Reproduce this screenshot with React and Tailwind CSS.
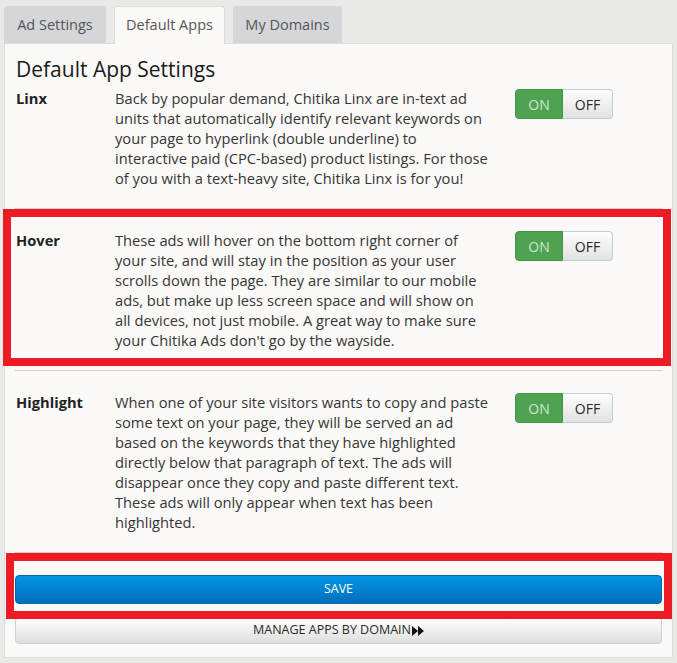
import React from 'react';

const apps = [
  {
    key: 'linx',
    label: 'Linx',
    lines: [
      'Back by popular demand, Chitika Linx are in-text ad',
      'units that automatically identify relevant keywords on',
      'your page to hyperlink (double underline) to',
      'interactive paid (CPC-based) product listings. For those',
      'of you with a text-heavy site, Chitika Linx is for you!'
    ]
  },
  {
    key: 'hover',
    label: 'Hover',
    lines: [
      'These ads will hover on the bottom right corner of',
      'your site, and will stay in the position as your user',
      'scrolls down the page. They are similar to our mobile',
      'ads, but make up less screen space and will show on',
      'all devices, not just mobile. A great way to make sure',
      "your Chitika Ads don't go by the wayside."
    ],
    marked: true
  },
  {
    key: 'highlight',
    label: 'Highlight',
    lines: [
      'When one of your site visitors wants to copy and paste',
      'some text on your page, they will be served an ad',
      'based on the keywords that they have highlighted',
      'directly below that paragraph of text. The ads will',
      'disappear once they copy and paste different text.',
      'These ads will only appear when text has been',
      'highlighted.'
    ]
  }
];

const Toggle = () => (
  <div className="flex h-[30px] w-[98px] text-[14px]">
    <span className="flex w-[48px] items-center justify-center rounded-l-[4px] border border-[#439245] bg-[#4fa251] text-[#cde9c6]">
      ON
    </span>
    <span className="flex flex-1 items-center justify-center rounded-r-[4px] border border-l-0 border-[#b9d0d8] bg-gradient-to-b from-[#fdfdfd] to-[#e2e2e2] text-[#2a2a2a]">
      OFF
    </span>
  </div>
);

const Tab = ({ label, width, active }) => (
  <div
    className={`flex h-[37px] items-center justify-center rounded-t-[3px] text-[14.5px] text-[#555] ${width} ${
      active ? 'relative z-10 -mb-px h-[38px] border border-b-0 border-[#dcdcdc] bg-[#faf9f7] pb-px' : 'bg-[#d5d6d9]'
    }`}
  >
    {label}
  </div>
);

export default function App() {
  return (
    <div
      className="min-h-screen bg-[#e9e9e8] pl-[4px] pr-[4px] pt-[6px]"
      style={{ fontFamily: '"Open Sans", "Liberation Sans", sans-serif' }}
    >
      <div className="flex gap-[8px]">
        <Tab label="Ad Settings" width="w-[102px]" />
        <Tab label="Default Apps" width="w-[111px]" active />
        <Tab label="My Domains" width="w-[109px]" />
      </div>

      <div className="w-[669px] border border-[#dcdcdc] bg-[#faf9f7] px-[10px] pb-[13px]">
        <h1 className="pl-px pt-[12px] text-[21px] leading-[26px] text-[#1a1a1a]">Default App Settings</h1>

        <div className="mt-[6px]">
          {apps.map((app, i) => (
            <div
              key={app.key}
              className={`relative grid grid-cols-[100px_400px_1fr] pb-[20px] ${i > 0 ? 'border-t border-[#cfcfcf] pt-[21px]' : ''}`}
            >
              <div className="pl-px text-[14.7px] font-bold leading-[20px] text-[#222]">{app.label}</div>
              <p className="text-[14.7px] leading-[20px] text-[#363636]">
                {app.lines.map((line) => (
                  <span key={line} className="block whitespace-nowrap">{line}</span>
                ))}
              </p>
              <div className="pt-px">
                <Toggle />
              </div>
              {app.marked && (
                <div className="absolute -left-[12px] -right-[9px] top-0 bottom-[4px] border-[8px] border-[#ed1c24]" />
              )}
            </div>
          ))}
        </div>

        <div className="border-t border-[#cfcfcf] pt-[22px]">
          <div className="relative">
            <button className="flex h-[29px] w-full items-center justify-center rounded-[4px] border border-[#0068ad] bg-gradient-to-b from-[#0595e6] to-[#006fbb] text-[12.5px] text-white">
              SAVE
            </button>
            <div className="absolute -left-[9px] -right-[10px] -top-[22px] -bottom-[15px] border-[8px] border-[#ed1c24]" />
          </div>

          <button className="mt-[13px] flex h-[27px] w-full items-center justify-center rounded-[4px] border border-[#c3d3da] bg-gradient-to-b from-[#ffffff] to-[#dedede] text-[12.5px] text-[#2a2a2a]">
            MANAGE APPS BY DOMAIN
            <svg width="12" height="10" viewBox="0 0 12 10" className="ml-[1px]">
              <path d="M0 0 L6 5 L0 10 Z M6 0 L12 5 L6 10 Z" fill="#111" />
            </svg>
          </button>
        </div>
      </div>
    </div>
  );
}
